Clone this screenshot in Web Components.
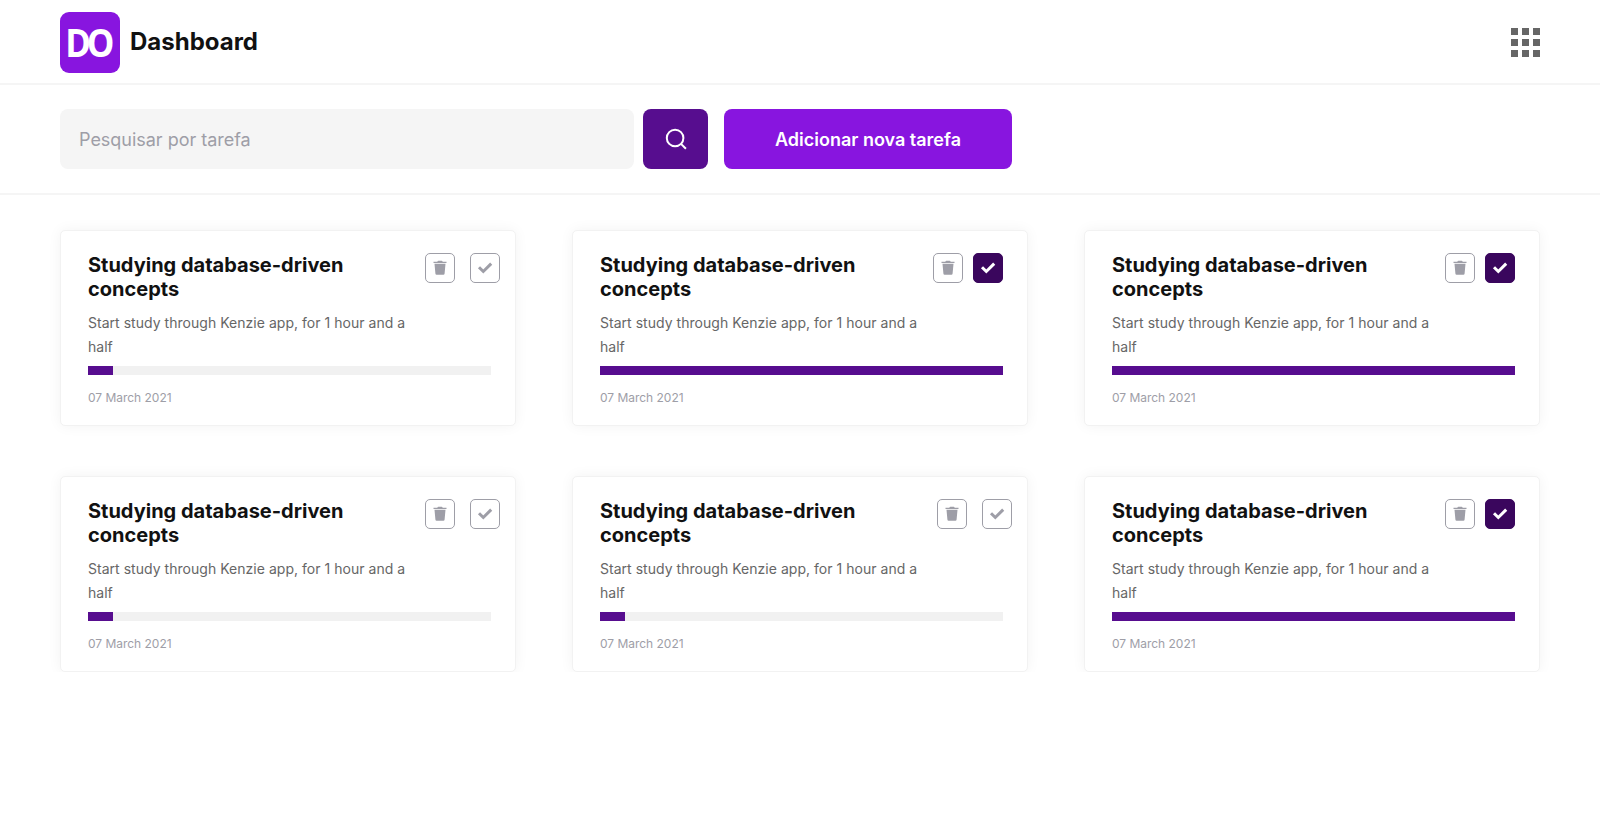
<!DOCTYPE html>
<html lang="pt-BR">
<head>
<meta charset="utf-8">
<title>Dashboard</title>
<style>
body{margin:0;background:#fff;font-family:Inter,"Liberation Sans",sans-serif;color:#111}
</style>
</head>
<body>
<do-dashboard></do-dashboard>
<script>
const define = (name, html, setup) => {
  const template = document.createElement('template');
  template.innerHTML = html;
  customElements.define(name, class extends HTMLElement {
    constructor() {
      super();
      this.attachShadow({mode: 'open'}).append(template.content.cloneNode(true));
    }
    connectedCallback() { if (setup) setup(this, this.shadowRoot); }
  });
};

define('do-logo', `
<style>:host{display:block;width:60px;height:61px}svg{display:block}text{font-family:"Open Sans",sans-serif;font-weight:700;font-size:39.500px;letter-spacing:-4.800px;fill:#fff}</style>
<svg width="60" height="61" viewBox="0 0 60 61">
<rect width="60" height="61" rx="9" fill="#8815df"/>
<text transform="translate(5.300 45) scale(.88 1)">DO</text>
</svg>`);

define('do-grid-icon', `
<style>:host{display:grid;grid-template-columns:repeat(3,7px);grid-auto-rows:7px;gap:4px}i{background:#666}</style>
<i></i><i></i><i></i><i></i><i></i><i></i><i></i><i></i><i></i>`);

define('do-header', `
<style>
:host{display:flex;box-sizing:border-box;height:85px;padding:0 60px 0;border-bottom:2px solid #f5f5f5;justify-content:space-between;align-items:flex-start}
.brand{display:flex;gap:10px;padding-top:12px}
h1{margin:0;font-size:24px;line-height:59px;font-weight:700;color:#111}
do-grid-icon{margin-top:28px}
</style>
<div class="brand"><do-logo></do-logo><h1><slot></slot></h1></div><do-grid-icon></do-grid-icon>`);

define('do-search', `
<style>
:host{display:flex;box-sizing:border-box;height:110px;padding:24px 60px 0;border-bottom:2px solid #f5f5f5}
.field{box-sizing:border-box;width:574px;height:60px;padding-left:19px;border-radius:8px;background:#f5f5f5;color:#9e9ea7;font-size:18px;line-height:62px;letter-spacing:-.02px}
.find{display:grid;place-items:center;width:65px;height:60px;margin-left:9px;border-radius:8px;background:#570d8f}
.add{width:288px;height:60px;margin-left:16px;border-radius:8px;background:#8815df;color:#fff;font-size:18px;font-weight:600;line-height:62px;text-align:center}
</style>
<div class="field">Pesquisar por tarefa</div>
<div class="find"><svg width="24" height="24" viewBox="0 0 24 24" fill="none" stroke="#fff" stroke-width="2"><circle cx="11.100" cy="11" r="8.300"/><path d="M17 16.900l4.900 4.900"/></svg></div>
<div class="add">Adicionar nova tarefa</div>`);

define('do-icon-button', `
<style>
:host{display:grid;place-items:center;box-sizing:border-box;width:30px;height:30px;border:1px solid #9e9ea7;border-radius:5px;color:#9e9ea7}
:host([active]){background:#3a065d;border-color:#3a065d;color:#fff}
svg{display:none}
:host([icon=trash]) .trash,:host([icon=check]) .check{display:block}
</style>
<svg class="trash" width="14" height="16" viewBox="0 0 14 16" fill="currentColor"><path d="M.5 1.700h3.800c.3-.6.6-.9 1.100-.9h3.200c.5 0 .8.3 1.100.9h3.800v1.300H.5z"/><path d="M1.500 3.700h11l-.9 9.900q-.1 1.200-1.200 1.200H3.600q-1.100 0-1.200-1.200z"/></svg>
<svg class="check" width="16" height="16" viewBox="0 0 16 16" fill="none" stroke="currentColor" stroke-width="3"><path d="M2 7.200l4.300 4.300L14.200 3.600"/></svg>`);

define('do-task', `
<style>
:host{display:block;box-sizing:border-box;height:196px;padding:22px 24px 0 27px;border:1px solid #f2f2f2;border-radius:5px;background:#fff;box-shadow:0 0 14px rgba(0,0,0,.05)}
.top{display:flex;justify-content:space-between;align-items:flex-start;height:49px}
h2{margin:0;width:290px;font-size:20px;line-height:24px;font-weight:700;color:#111}
.actions{display:flex;gap:15px;margin-right:-9px}
:host([done]) .actions{gap:10px;margin-right:0}
p{margin:9px 0 0;width:330px;font-size:14px;line-height:24px;letter-spacing:.03px;color:#666}
.bar{margin-top:7px;height:9px;background:#f1f1f1}
.fill{width:25px;height:9px;background:#570d8f}
:host([done]) .fill{width:100%}
time{display:block;margin-top:15px;font-size:12px;line-height:16px;letter-spacing:-.02px;color:#9e9ea7}
</style>
<div class="top"><h2><slot name="title"></slot></h2><div class="actions"><do-icon-button icon="trash"></do-icon-button><do-icon-button class="mark" icon="check"></do-icon-button></div></div>
<p><slot></slot></p>
<div class="bar"><div class="fill"></div></div>
<time><slot name="date"></slot></time>`,
(host, root) => root.querySelector('.mark').toggleAttribute('active', host.hasAttribute('done')));

define('do-dashboard', `
<style>
:host{display:block}
main{display:grid;grid-template-columns:repeat(3,456px);column-gap:56px;row-gap:50px;padding:35px 60px 0}
</style>
<do-header>Dashboard</do-header><do-search></do-search><main></main>`,
(host, root) => {
  root.querySelector('main').innerHTML = [false, true, true, false, false, true].map(done =>
    `<do-task ${done ? 'done' : ''}><span slot="title">Studying database-driven concepts</span>Start study through Kenzie app, for 1 hour and a half<span slot="date">07 March 2021</span></do-task>`).join('');
});
</script>
</body>
</html>
